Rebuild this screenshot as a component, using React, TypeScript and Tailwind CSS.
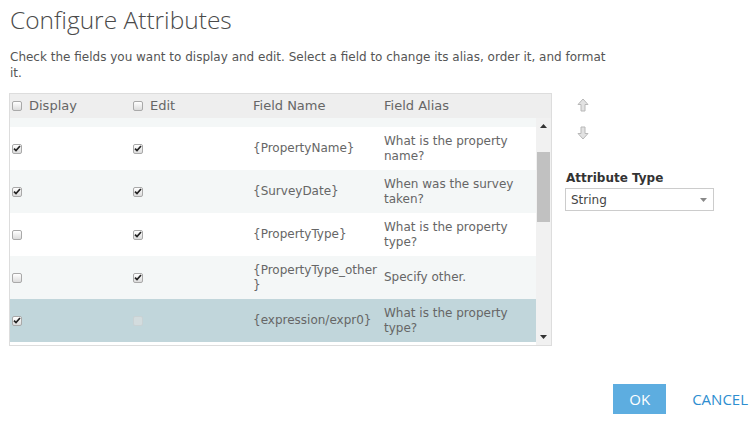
type Row = {
  name: React.ReactNode;
  alias: string;
  display: boolean;
  edit: boolean;
  editDisabled?: boolean;
  selected?: boolean;
};

const rows: Row[] = [
  { name: "{PropertyName}", alias: "What is the property name?", display: true, edit: true },
  { name: "{SurveyDate}", alias: "When was the survey taken?", display: true, edit: true },
  { name: "{PropertyType}", alias: "What is the property type?", display: false, edit: true },
  {
    name: (
      <>
        {"{PropertyType_other"}
        <br />
        {"}"}
      </>
    ),
    alias: "Specify other.",
    display: false,
    edit: true,
  },
  {
    name: "{expression/expr0}",
    alias: "What is the property type?",
    display: true,
    edit: false,
    editDisabled: true,
    selected: true,
  },
];

function Checkbox({ checked, disabled }: { checked: boolean; disabled?: boolean }) {
  return (
    <span
      className={`flex h-[10px] w-[10px] shrink-0 items-center justify-center rounded-[2px] border ${
        disabled
          ? "border-[#c9d2d4] bg-[#d3dcde]"
          : "border-[#a9a9a9] bg-gradient-to-b from-[#ffffff] to-[#dcdcdc]"
      }`}
    >
      {checked && (
        <svg width="8" height="7" viewBox="0 0 8 7">
          <path d="M1 3.6 L3 5.6 L7 1" fill="none" stroke="#222" strokeWidth="1.7" />
        </svg>
      )}
    </span>
  );
}

function MoveArrow({ down }: { down?: boolean }) {
  return (
    <svg width="12" height="14" viewBox="0 0 12 14" className={down ? "rotate-180" : ""}>
      <path
        d="M6 1 L11 6.5 L8 6.5 L8 13 L4 13 L4 6.5 L1 6.5 Z"
        fill="#e2e2e2"
        stroke="#b8b8b8"
        strokeWidth="1"
        strokeLinejoin="round"
      />
    </svg>
  );
}

export default function App() {
  return (
    <div
      className="h-[423px] w-[755px] overflow-hidden bg-white text-[#555]"
      style={{ fontFamily: '"DejaVu Sans", Verdana, sans-serif' }}
    >
      <h1
        className="pl-[10px] pt-[6px] text-[24.5px] font-light leading-[28px] text-[#4a4a4a]"
        style={{ fontFamily: '"Open Sans", sans-serif' }}
      >
        Configure Attributes
      </h1>
      <p className="ml-[10px] mt-[15px] w-[605px] text-[12px] leading-[16px] text-[#555]">
        Check the fields you want to display and edit. Select a field to change its alias, order it, and format it.
      </p>

      <div className="mt-[12px] flex">
        <div className="ml-[9px] flex h-[253px] w-[543px] flex-col border border-[#dddddd]">
          <div className="flex h-[24px] shrink-0 items-center bg-[#eeeeee] text-[13px] text-[#666]">
            <div className="flex w-[120px] items-center gap-[7px] pl-[2px]">
              <Checkbox checked={false} />
              Display
            </div>
            <div className="flex w-[120px] items-center gap-[7px] pl-[3px]">
              <Checkbox checked={false} />
              Edit
            </div>
            <div className="w-[131px] pl-[3px]">Field Name</div>
            <div className="pl-[3px]">Field Alias</div>
          </div>

          <div className="flex min-h-0 flex-1">
            <div className="flex w-[526px] flex-col overflow-hidden text-[12px] leading-[15px] text-[#666]">
              <div className="h-[9px] shrink-0 bg-[#f4f7f7]" />
              {rows.map((r, i) => (
                <div
                  key={i}
                  className={`flex h-[43px] shrink-0 items-center ${
                    r.selected ? "bg-[#c1d6db]" : i % 2 === 1 ? "bg-[#f4f7f7]" : "bg-white"
                  }`}
                >
                  <div className="w-[120px] pl-[2px]">
                    <Checkbox checked={r.display} />
                  </div>
                  <div className="w-[120px] pl-[3px]">
                    <Checkbox checked={r.edit} disabled={r.editDisabled} />
                  </div>
                  <div className="w-[131px] pl-[3px]">{r.name}</div>
                  <div className="w-[155px] pl-[3px]">{r.alias}</div>
                </div>
              ))}
            </div>
            <div className="flex w-[15px] flex-col items-center bg-[#f1f1f1]">
              <div className="flex h-[16px] w-full items-center justify-center">
                <svg width="7" height="4" viewBox="0 0 7 4">
                  <path d="M0 4 L3.5 0 L7 4 Z" fill="#333" />
                </svg>
              </div>
              <div className="mt-[18px] h-[70px] w-[13px] bg-[#c1c1c1]" />
              <div className="flex-1" />
              <div className="flex h-[16px] w-full items-center justify-center">
                <svg width="7" height="4" viewBox="0 0 7 4">
                  <path d="M0 0 L3.5 4 L7 0 Z" fill="#333" />
                </svg>
              </div>
            </div>
          </div>
        </div>

        <div className="ml-[13px] flex flex-col">
          <div className="ml-[12px] mt-[5px] flex flex-col gap-[14px]">
            <MoveArrow />
            <MoveArrow down />
          </div>
          <div className="ml-[1px] mt-[29px] text-[12px] font-bold text-[#333]">Attribute Type</div>
          <div className="mt-[1px] flex h-[23px] w-[149px] items-center justify-between border border-[#cccccc] pl-[5px] pr-[6px] text-[12px] text-[#444]">
            String
            <svg width="7" height="4" viewBox="0 0 7 4">
              <path d="M0 0 L3.5 4 L7 0 Z" fill="#888" />
            </svg>
          </div>
        </div>
      </div>

      <div
        className="mr-[7px] mt-[38px] flex items-center justify-end gap-[26px] text-[15px]"
        style={{ fontFamily: '"Open Sans", sans-serif' }}
      >
        <button className="h-[30px] w-[53px] bg-[#5dade0] text-white">OK</button>
        <button className="text-[#2d8ed0]">CANCEL</button>
      </div>
    </div>
  );
}
